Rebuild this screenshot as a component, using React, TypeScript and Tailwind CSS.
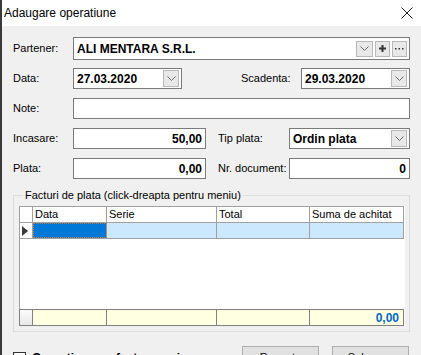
import React from "react";

function Chevron() {
  return (
    <svg width="9" height="5" viewBox="0 0 9 5">
      <path d="M0.5 0.5 L4.5 4.5 L8.5 0.5" fill="none" stroke="#6a6a6a" strokeWidth="1" />
    </svg>
  );
}

function DropBtn({ w, h }: { w: string; h: string }) {
  return (
    <div className={`${w} ${h} flex items-center justify-center border border-[#b8b8b8] bg-[#e8e8e8]`}>
      <Chevron />
    </div>
  );
}

export default function App() {
  return (
    <div className="w-[421px] h-[355px] overflow-hidden flex flex-col border-l-2 border-[#3a3a3a] font-['Liberation_Sans',Arial,sans-serif] text-[11px] text-black">
      {/* title bar */}
      <div className="h-[26px] shrink-0 bg-white flex items-center justify-between pl-[2px] pr-[8px]">
        <span className="text-[12px] leading-none">Adaugare operatiune</span>
        <svg width="12" height="12" viewBox="0 0 12 12">
          <path d="M0.5 0.5 L11.5 11.5 M11.5 0.5 L0.5 11.5" stroke="#1a1a1a" strokeWidth="1" />
        </svg>
      </div>

      <div className="flex-1 bg-[#f0f0f0] pl-[11px] pt-[11px] flex flex-col">
        {/* Partener */}
        <div className="flex items-center h-[23px]">
          <div className="w-[60px]">Partener:</div>
          <div className="w-[337px] h-[23px] border border-[#7a7a7a] bg-white flex items-center pl-[3px] pr-[2px]">
            <span className="flex-1 font-bold text-[12px]">ALI MENTARA S.R.L.</span>
            <div className="flex items-center gap-[2px]">
              <DropBtn w="w-[17px]" h="h-[16px]" />
              <div className="w-[15px] h-[16px] flex items-center justify-center border border-[#b8b8b8] bg-[#e8e8e8]">
                <svg width="7" height="7" viewBox="0 0 7 7">
                  <path d="M3.5 0 V7 M0 3.5 H7" stroke="#333" strokeWidth="2" />
                </svg>
              </div>
              <div className="w-[15px] h-[16px] flex items-center justify-center border border-[#b8b8b8] bg-[#e8e8e8]">
                <svg width="9" height="2" viewBox="0 0 9 2">
                  <rect x="0" y="0" width="1.5" height="1.5" fill="#333" />
                  <rect x="3.5" y="0" width="1.5" height="1.5" fill="#333" />
                  <rect x="7" y="0" width="1.5" height="1.5" fill="#333" />
                </svg>
              </div>
            </div>
          </div>
        </div>

        {/* Data / Scadenta */}
        <div className="flex items-center h-[21px] mt-[8px]">
          <div className="w-[60px]">Data:</div>
          <div className="w-[109px] h-[21px] border border-[#7a7a7a] bg-white flex items-center pl-[3px] pr-[2px]">
            <span className="flex-1 font-bold text-[12px]">27.03.2020</span>
            <DropBtn w="w-[16px]" h="h-[17px]" />
          </div>
          <div className="w-[60px] ml-[59px]">Scadenta:</div>
          <div className="w-[109px] h-[21px] border border-[#7a7a7a] bg-white flex items-center pl-[3px] pr-[2px]">
            <span className="flex-1 font-bold text-[12px]">29.03.2020</span>
            <DropBtn w="w-[16px]" h="h-[17px]" />
          </div>
        </div>

        {/* Note */}
        <div className="flex items-center h-[21px] mt-[9px]">
          <div className="w-[60px]">Note:</div>
          <div className="w-[337px] h-[21px] border border-[#7a7a7a] bg-white" />
        </div>

        {/* Incasare / Tip plata */}
        <div className="flex items-center h-[21px] mt-[9px]">
          <div className="w-[60px]">Incasare:</div>
          <div className="w-[133px] h-[21px] border border-[#7a7a7a] bg-white flex items-center justify-end pr-[3px]">
            <span className="font-bold text-[12px]">50,00</span>
          </div>
          <div className="w-[71px] ml-[12px]">Tip plata:</div>
          <div className="w-[121px] h-[21px] border border-[#7a7a7a] bg-white flex items-center pl-[3px] pr-[2px]">
            <span className="flex-1 font-bold text-[12px]">Ordin plata</span>
            <DropBtn w="w-[16px]" h="h-[17px]" />
          </div>
        </div>

        {/* Plata / Nr. document */}
        <div className="flex items-center h-[21px] mt-[9px]">
          <div className="w-[60px]">Plata:</div>
          <div className="w-[133px] h-[21px] border border-[#7a7a7a] bg-white flex items-center justify-end pr-[3px]">
            <span className="font-bold text-[12px]">0,00</span>
          </div>
          <div className="w-[71px] ml-[12px]">Nr. document:</div>
          <div className="w-[121px] h-[21px] border border-[#7a7a7a] bg-white flex items-center justify-end pr-[3px]">
            <span className="font-bold text-[12px]">0</span>
          </div>
        </div>

        {/* Group box */}
        <div className="relative mt-[16px] w-[397px] h-[137px] shrink-0 border border-[#dcdcdc] pl-[5px] pt-[10px]">
          <span className="absolute left-[9px] top-[-8px] bg-[#f0f0f0] px-[2px] leading-[14px]">
            Facturi de plata (click-dreapta pentru meniu)
          </span>
          <div className="w-[386px] h-[120px] bg-white flex flex-col">
            {/* header */}
            <div className="flex h-[17px] border-t border-b border-l border-[#a0a0a0] w-[385px]">
              <div className="w-[13px] border-r border-[#a0a0a0]" />
              <div className="w-[74px] border-r border-[#a0a0a0] pl-[2px] leading-[15px]">Data</div>
              <div className="w-[110px] border-r border-[#a0a0a0] pl-[2px] leading-[15px]">Serie</div>
              <div className="w-[93px] border-r border-[#a0a0a0] pl-[2px] leading-[15px]">Total</div>
              <div className="w-[94px] border-r border-[#a0a0a0] pl-[2px] leading-[15px]">Suma de achitat</div>
            </div>
            {/* row 1 */}
            <div className="flex h-[16px] border-b border-l border-[#a0a0a0] w-[385px]">
              <div className="w-[13px] border-r border-[#a0a0a0] flex items-center pl-[2px]">
                <svg width="6" height="10" viewBox="0 0 6 10">
                  <path d="M0 0 L6 5 L0 10 Z" fill="#3a3a3a" />
                </svg>
              </div>
              <div className="w-[74px] border-r border-[#a0a0a0] bg-[#0078d7] outline outline-1 outline-dotted outline-[#c87a3a] -outline-offset-1" />
              <div className="w-[110px] border-r border-[#a0a0a0] bg-[#cce8ff]" />
              <div className="w-[93px] border-r border-[#a0a0a0] bg-[#cce8ff]" />
              <div className="w-[94px] border-r border-[#a0a0a0] bg-[#cce8ff]" />
            </div>
            <div className="flex-1 border-l border-[#a0a0a0]" />
            {/* footer */}
            <div className="flex h-[17px] border-t border-b border-l border-[#808080] w-[385px]">
              <div className="w-[13px] border-r border-[#808080] bg-gradient-to-b from-[#fbfbfb] to-[#e8e8e8]" />
              <div className="w-[74px] border-r border-[#808080] bg-[#ffffe1]" />
              <div className="w-[110px] border-r border-[#808080] bg-[#ffffe1]" />
              <div className="w-[93px] border-r border-[#808080] bg-[#ffffe1]" />
              <div className="w-[94px] border-r border-[#808080] bg-[#ffffe1] flex items-center justify-end pr-[4px]">
                <span className="font-bold text-[12px] text-[#0066cc]">0,00</span>
              </div>
            </div>
          </div>
        </div>

        {/* bottom */}
        <div className="flex items-start mt-[14px] h-[23px] shrink-0">
          <div className="flex items-center mt-[3px]">
            <div className="w-[13px] h-[13px] border border-[#333] bg-white" />
            <span className="ml-[6px] font-bold text-[12px]">Operatiune cu factura emisa</span>
          </div>
          <div className="ml-auto mr-[12px] flex gap-[13px]">
            <div className="w-[77px] h-[23px] border border-[#adadad] bg-[#e1e1e1] flex items-center justify-center">Renunta</div>
            <div className="w-[77px] h-[23px] border border-[#adadad] bg-[#e1e1e1] flex items-center justify-center">Salveaza</div>
          </div>
        </div>
      </div>
    </div>
  );
}
